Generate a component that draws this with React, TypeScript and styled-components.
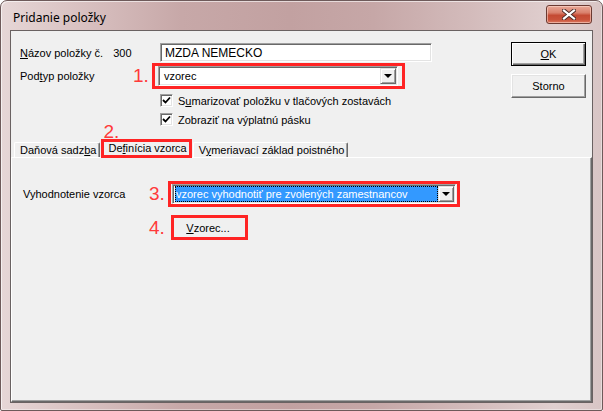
import React from 'react';
import styled, { createGlobalStyle } from 'styled-components';

const GlobalStyle = createGlobalStyle`
  html, body { margin: 0; padding: 0; background: #ffffff; }
  body { font-family: "Liberation Sans", Arial, sans-serif; font-size: 11px; color: #000; }
  #root { width: 603px; height: 411px; }
`;

const Window = styled.div`
  width: 603px;
  height: 411px;
  box-sizing: border-box;
  display: flex;
  flex-direction: column;
  border: 1px solid #6e5a5a;
  border-radius: 7px 7px 2px 2px;
  background: linear-gradient(90deg, #e6d6d6 0%, #dac3c3 12%, #c7a8a8 30%, #c2a1a1 48%, #c6a7a7 62%, #d3bbbb 78%, #e0cfcf 92%, #d8c5c5 100%);
  padding: 0 9px 7px 9px;
  box-shadow: inset 1px 1px 0 rgba(255,255,255,0.6), inset -1px -1px 0 rgba(255,255,255,0.4);
`;

const TitleBar = styled.div`
  height: 29px;
  display: flex;
  align-items: flex-start;
  justify-content: space-between;
`;

const TitleText = styled.div`
  font-family: "Noto Sans", "Liberation Sans", sans-serif;
  font-size: 12px;
  color: #000;
  padding: 10px 0 0 3px;
  line-height: 14px;
`;

const CloseButton = styled.div`
  width: 46px;
  height: 19px;
  margin: 4px 1px 0 0;
  box-sizing: border-box;
  border: 1px solid #6b3a32;
  border-radius: 3px;
  background: linear-gradient(180deg, #e9a998 0%, #d9806c 40%, #c44a33 55%, #c9523a 80%, #dd7a62 100%);
  box-shadow: inset 0 0 0 1px rgba(255,220,210,0.55);
  display: flex;
  align-items: center;
  justify-content: center;
`;

const Client = styled.div`
  flex: 1;
  display: flex;
  flex-direction: column;
  background: #f0f0f0;
  border: 1px solid #6a6262;
  min-height: 0;
`;

const Top = styled.div`
  display: flex;
  padding: 12px 6px 0 9px;
`;

const Form = styled.div`
  flex: 1;
  display: flex;
  flex-direction: column;
`;

const Row = styled.div<{ $top?: number; $h: number; $indent?: number }>`
  display: flex;
  align-items: center;
  height: ${p => p.$h}px;
  margin-top: ${p => p.$top ?? 0}px;
  padding-left: ${p => p.$indent ?? 0}px;
`;

const Label = styled.div<{ $w: number }>`
  width: ${p => p.$w}px;
  flex: none;
  display: flex;
  white-space: nowrap;
`;

const Num = styled.span`
  flex: 1;
`;

const Count = styled.span`
  margin-left: 10px;
`;

const U = styled.span`
  text-decoration: underline;
`;

const TextInput = styled.div`
  width: 272px;
  height: 19px;
  box-sizing: border-box;
  background: #fff;
  border: 1px solid;
  border-color: #a0a0a0 #ffffff #ffffff #a0a0a0;
  box-shadow: inset 1px 1px 0 #696969, inset -1px -1px 0 #e3e3e3;
  padding: 3px 0 0 4px;
  font-size: 12px;
  line-height: 13px;
`;

const Marker = styled.span<{ $w: number }>`
  width: ${p => p.$w}px;
  flex: none;
  font-family: "Liberation Sans", Arial, sans-serif;
  font-size: 19px;
  line-height: 20px;
  color: #ff3a3a;
`;

const RedBox = styled.div<{ $w: number; $h: number; $pad: number }>`
  width: ${p => p.$w}px;
  height: ${p => p.$h}px;
  box-sizing: border-box;
  border: 3px solid #ff2424;
  padding-left: ${p => p.$pad}px;
  display: flex;
  align-items: center;
  flex: none;
`;

const Combo = styled.div<{ $w: number }>`
  width: ${p => p.$w}px;
  height: 20px;
  box-sizing: border-box;
  background: #fff;
  border: 1px solid;
  border-color: #a0a0a0 #ffffff #ffffff #a0a0a0;
  box-shadow: inset 1px 1px 0 #696969, inset -1px -1px 0 #e3e3e3;
  display: flex;
  padding: 1px;
`;

const ComboText = styled.div<{ $sel?: boolean }>`
  flex: 1;
  margin-left: 1px;
  padding-left: ${p => (p.$sel ? 1 : 3)}px;
  line-height: 16px;
  font-size: 11px;
  white-space: nowrap;
  overflow: hidden;
  background: ${p => (p.$sel ? '#3399ff' : 'transparent')};
  color: ${p => (p.$sel ? '#ffffff' : '#000000')};
  outline: ${p => (p.$sel ? '1px dotted #000' : 'none')};
  outline-offset: -1px;
  box-sizing: border-box;
`;

const DropButton = styled.div`
  width: 16px;
  height: 16px;
  box-sizing: border-box;
  background: #f0f0f0;
  border: 1px solid;
  border-color: #e3e3e3 #696969 #696969 #e3e3e3;
  box-shadow: inset 1px 1px 0 #ffffff, inset -1px -1px 0 #a0a0a0;
  display: flex;
  align-items: center;
  justify-content: center;
  flex: none;
  &::after {
    content: '';
    width: 0;
    height: 0;
    border-left: 4px solid transparent;
    border-right: 4px solid transparent;
    border-top: 4px solid #000;
  }
`;

const CheckBox = styled.div`
  width: 13px;
  height: 13px;
  box-sizing: border-box;
  background: #fff;
  border: 1px solid;
  border-color: #a0a0a0 #ffffff #ffffff #a0a0a0;
  box-shadow: inset 1px 1px 0 #696969, inset -1px -1px 0 #e3e3e3;
  display: flex;
  align-items: center;
  justify-content: center;
  margin-right: 5px;
  flex: none;
`;

const Buttons = styled.div`
  width: 75px;
  display: flex;
  flex-direction: column;
  gap: 8px;
  margin-top: -1px;
`;

const Button = styled.div<{ $default?: boolean }>`
  height: 24px;
  box-sizing: border-box;
  background: #f0f0f0;
  border: 1px solid;
  border-color: ${p => (p.$default ? '#000' : '#ffffff #696969 #696969 #ffffff')};
  box-shadow: ${p =>
    p.$default
      ? 'inset 1px 1px 0 #ffffff, inset -1px -1px 0 #696969, inset -2px -2px 0 #a0a0a0'
      : 'inset -1px -1px 0 #a0a0a0, inset 1px 1px 0 #e3e3e3'};
  display: flex;
  align-items: center;
  justify-content: center;
  font-size: 11px;
`;

const TabStrip = styled.div`
  display: flex;
  align-items: flex-end;
  height: 18px;
  margin-top: 13px;
  padding-left: 3px;
  position: relative;
  z-index: 1;
`;

const Tab = styled.div`
  height: 15px;
  box-sizing: border-box;
  padding: 1px 3px 0 5px;
  border-top: 1px solid #fff;
  border-left: 1px solid #fff;
  border-right: 1px solid #696969;
  box-shadow: inset -1px 0 0 #a0a0a0;
  border-radius: 2px 2px 0 0;
  white-space: nowrap;
  line-height: 13px;
`;

const SelectedTab = styled.div`
  position: relative;
  height: 19px;
  box-sizing: border-box;
  border: 3px solid #ff2424;
  background: #f0f0f0;
  padding: 0 2px 0 4px;
  margin: 0 1px -1px 1px;
  line-height: 13px;
  white-space: nowrap;
`;

const TabMarker = styled.span`
  position: absolute;
  left: -1px;
  top: -20px;
  font-size: 19px;
  line-height: 20px;
  color: #ff3a3a;
`;

const Pane = styled.div`
  flex: 1;
  display: flex;
  flex-direction: column;
  border-top: 1px solid #ffffff;
  border-left: 1px solid #ffffff;
  border-right: 1px solid #696969;
  border-bottom: 1px solid #696969;
  box-shadow: inset -1px -1px 0 #a0a0a0;
  padding: 23px 0 0 11px;
`;

const PlainButton = styled.div`
  flex: 1;
  height: 100%;
  display: flex;
  align-items: center;
  justify-content: center;
  background: #f0f0f0;
  margin-right: 3px;
`;

const CloseIcon = () => (
  <svg width="14" height="11" viewBox="0 0 14 11">
    <path d="M2 1.5 L12 9.5 M12 1.5 L2 9.5" stroke="#4a2a26" strokeWidth="4" strokeLinecap="square" />
    <path d="M2 1.5 L12 9.5 M12 1.5 L2 9.5" stroke="#ffffff" strokeWidth="2.2" strokeLinecap="square" />
  </svg>
);

const Check = () => (
  <svg width="9" height="9" viewBox="0 0 9 9">
    <path d="M1 4 L3.5 6.5 L8 1.5" stroke="#000" strokeWidth="1.8" fill="none" />
  </svg>
);

export default function App() {
  return (
    <>
      <GlobalStyle />
      <Window>
        <TitleBar>
          <TitleText>Pridanie položky</TitleText>
          <CloseButton>
            <CloseIcon />
          </CloseButton>
        </TitleBar>
        <Client>
          <Top>
            <Form>
              <Row $h={19}>
                <Label $w={140}>
                  <span>
                    <U>N</U>ázov položky č.
                  </span>
                  <Count>300</Count>
                </Label>
                <TextInput>MZDA NEMECKO</TextInput>
              </Row>
              <Row $h={26} $top={1}>
                <Label $w={113}>
                  <span>
                    Pod<U>t</U>yp položky
                  </span>
                </Label>
                <Marker $w={19}>1.</Marker>
                <RedBox $w={253} $h={26} $pad={3}>
                  <Combo $w={240}>
                    <ComboText>vzorec</ComboText>
                    <DropButton />
                  </Combo>
                </RedBox>
              </Row>
              <Row $h={13} $top={5} $indent={140}>
                <CheckBox>
                  <Check />
                </CheckBox>
                <span>
                  S<U>u</U>marizovať položku v tlačových zostavách
                </span>
              </Row>
              <Row $h={13} $top={6} $indent={140}>
                <CheckBox>
                  <Check />
                </CheckBox>
                <span>Zobraziť na výplatnú pásku</span>
              </Row>
            </Form>
            <Buttons>
              <Button $default>
                <span>
                  <U>O</U>K
                </span>
              </Button>
              <Button>Storno</Button>
            </Buttons>
          </Top>
          <TabStrip>
            <Tab>
              Daňová sadz<U>b</U>a
            </Tab>
            <SelectedTab>
              <TabMarker>2.</TabMarker>
              De<U>f</U>inícia vzorca
            </SelectedTab>
            <Tab>
              V<U>y</U>meriavací základ poistného
            </Tab>
          </TabStrip>
          <Pane>
            <Row $h={26}>
              <Label $w={126}>
                <Num>Vyhodnotenie vzorca</Num>
              </Label>
              <Marker $w={19}>3.</Marker>
              <RedBox $w={292} $h={26} $pad={1}>
                <Combo $w={284}>
                  <ComboText $sel>vzorec vyhodnotiť pre zvolených zamestnancov</ComboText>
                  <DropButton />
                </Combo>
              </RedBox>
            </Row>
            <Row $h={25} $top={8} $indent={126}>
              <Marker $w={22}>4.</Marker>
              <RedBox $w={77} $h={25} $pad={0}>
                <PlainButton>
                  <span>
                    <U>V</U>zorec...
                  </span>
                </PlainButton>
              </RedBox>
            </Row>
          </Pane>
        </Client>
      </Window>
    </>
  );
}
